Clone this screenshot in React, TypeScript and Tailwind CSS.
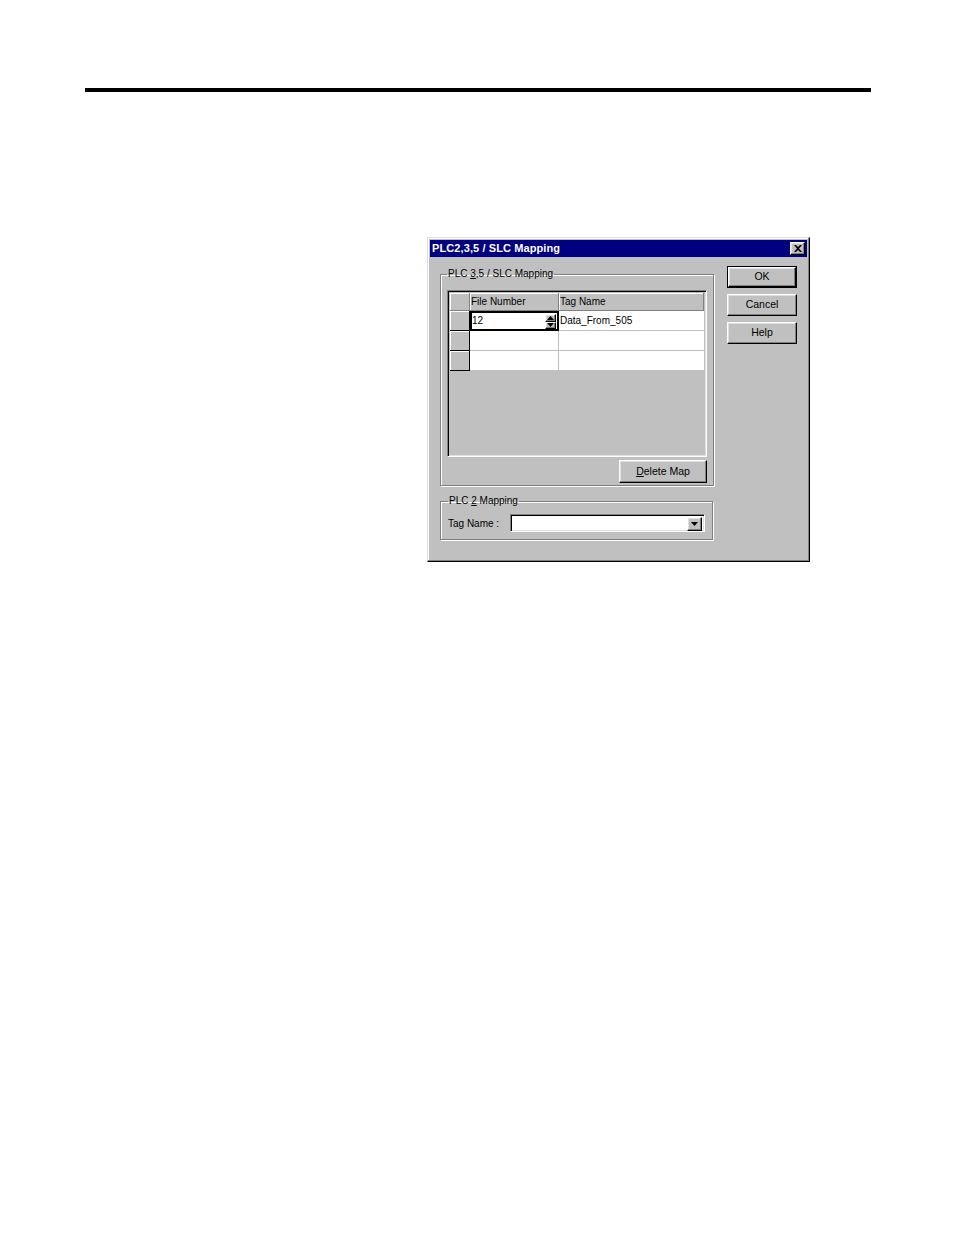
import React from 'react'

const font = { fontFamily: '"Liberation Sans", Arial, sans-serif' }

const raised =
  'bg-[#c0c0c0] border border-t-white border-l-white border-r-black border-b-black shadow-[inset_-1px_-1px_#808080,inset_1px_1px_#dfdfdf]'
const sunken =
  'border border-t-[#808080] border-l-[#808080] border-r-white border-b-white shadow-[inset_1px_1px_#000,inset_-1px_-1px_#dfdfdf]'

function Button({ children, className = '' }: { children: React.ReactNode; className?: string }) {
  return (
    <div className={`${raised} flex items-center justify-center text-[10.5px] text-black ${className}`}>
      {children}
    </div>
  )
}

function GroupBox({ title, children, className = '' }: { title: React.ReactNode; children: React.ReactNode; className?: string }) {
  return (
    <fieldset
      className={`border border-[#808080] shadow-[inset_1px_1px_#fff,1px_1px_#fff] ${className}`}
    >
      <legend className="px-[1px] text-[10px] leading-[12px] text-black">{title}</legend>
      {children}
    </fieldset>
  )
}

const rows = [
  { file: '12', tag: 'Data_From_505', active: true },
  { file: '', tag: '', active: false },
  { file: '', tag: '', active: false },
]

export default function App() {
  return (
    <div className="min-h-[1235px] w-[954px] bg-white" style={font}>
      <div className="pt-[88px] px-[85px]">
        <div className="h-[4px] w-[786px] bg-black" />

        <div className="ml-[342px] mt-[145px] w-[383px] h-[325px] bg-[#c0c0c0] border border-t-[#dfdfdf] border-l-[#dfdfdf] border-r-black border-b-black shadow-[inset_-1px_-1px_#808080,inset_1px_1px_#fff] p-[2px] flex flex-col">
          {/* title bar */}
          <div className="h-[17px] bg-[#000080] flex items-center justify-between pl-[2px] pr-[2px]">
            <span className="text-white font-bold text-[11px] leading-none tracking-[0.1px]">PLC2,3,5 / SLC Mapping</span>
            <div className={`${raised} w-[15px] h-[13px] flex items-center justify-center`}>
              <svg width="8" height="7" viewBox="0 0 8 7">
                <path d="M0 0h2l2 2 2-2h2L5 3.5 8 7H6L4 5 2 7H0l3-3.5z" fill="#000" />
              </svg>
            </div>
          </div>

          <div className="flex pl-[10px] pr-[11px] pt-[10px]">
            <div className="flex flex-col w-[273px]">
              <GroupBox
                title={<>PLC <span className="underline">3</span>,5 / SLC Mapping</>}
                className="mt-[1px] px-[6px] pt-[10px] pb-[2px]"
              >
                <div className={`${sunken} h-[167px] w-[260px] bg-[#c0c0c0] p-[2px]`}>
                  <div className="flex h-[18px]">
                    <div className="w-[20px] border-r border-b border-[#808080] shadow-[inset_1px_1px_#fff]" />
                    <div className="w-[89px] border-r border-b border-[#808080] shadow-[inset_1px_1px_#fff] text-[10px] leading-[17px] pl-[1px]">File Number</div>
                    <div className="flex-1 border-r border-b border-[#808080] shadow-[inset_1px_1px_#fff] text-[10px] leading-[17px] pl-[1px]">Tag Name</div>
                  </div>
                  {rows.map((r, i) => (
                    <div key={i} className="flex h-[20px]">
                      <div className="w-[20px] border-r border-b border-black shadow-[inset_1px_1px_#fff]" />
                      {r.active ? (
                        <div className="w-[89px] bg-white border-2 border-black flex items-center justify-between">
                          <span className="text-[10px] leading-none">{r.file}</span>
                          <div className="flex flex-col w-[11px] h-[15px] mr-[1px]">
                            <div className={`${raised} h-[8px] flex items-center justify-center`}>
                              <svg width="7" height="4" viewBox="0 0 7 4"><path d="M3.5 0L7 4H0z" fill="#000" /></svg>
                            </div>
                            <div className={`${raised} h-[7px] flex items-center justify-center`}>
                              <svg width="7" height="4" viewBox="0 0 7 4"><path d="M0 0h7L3.5 4z" fill="#000" /></svg>
                            </div>
                          </div>
                        </div>
                      ) : (
                        <div className="w-[89px] bg-white border-r border-b border-[#c0c0c0]" />
                      )}
                      <div className="flex-1 bg-white border-b border-[#c0c0c0] flex items-center pl-[1px] text-[10px]">
                        {r.tag}
                      </div>
                    </div>
                  ))}
                </div>
                <div className="flex justify-end mt-[3px]">
                  <Button className="w-[88px] h-[23px]">
                    <span><span className="underline">D</span>elete Map</span>
                  </Button>
                </div>
              </GroupBox>

              <GroupBox
                title={<>PLC <span className="underline">2</span> Mapping</>}
                className="mt-[9px] px-[7px] pb-[7px]"
              >
                <div className="flex items-center mt-[7px]">
                  <span className="text-[10px] w-[62px]">Tag Name :</span>
                  <div className={`${sunken} bg-white w-[195px] h-[18px] flex justify-end p-[2px]`}>
                    <div className={`${raised} w-[15px] h-[14px] flex items-center justify-center`}>
                      <svg width="7" height="4" viewBox="0 0 7 4"><path d="M0 0h7L3.5 4z" fill="#000" /></svg>
                    </div>
                  </div>
                </div>
              </GroupBox>
            </div>

            <div className="flex flex-col ml-[14px] gap-[6px] -mt-[1px]">
              <div className="border border-black">
                <Button className="w-[68px] h-[20px]">OK</Button>
              </div>
              <Button className="w-[70px] h-[22px]">Cancel</Button>
              <Button className="w-[70px] h-[22px]">Help</Button>
            </div>
          </div>
        </div>
      </div>
    </div>
  )
}
